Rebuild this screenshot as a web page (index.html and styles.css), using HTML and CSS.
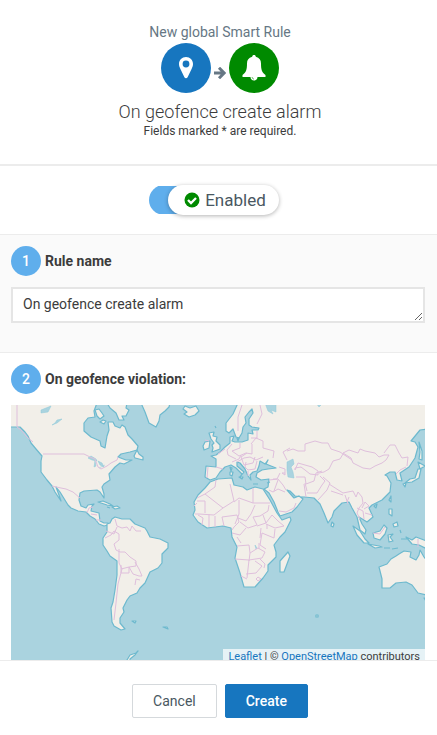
FILE: index.html
```html
<!DOCTYPE html>
<html lang="en">
<head>
<meta charset="utf-8">
<meta name="viewport" content="width=device-width, initial-scale=1">
<title>New global Smart Rule</title>
<link rel="stylesheet" href="styles.css">
</head>
<body>
<form class="rule">
  <header class="head">
    <p class="kicker">New global Smart Rule</p>
    <div class="flow">
      <span class="disc disc-pin"><svg width="14" height="22" viewBox="0 0 14 22"><path fill="#fff" fill-rule="evenodd" d="M7 0c4 0 7 3 7 7 0 2-.6 3.200-1.300 4.700L8.600 20.300c-.6 1.300-2.600 1.300-3.200 0L1.300 11.700C.6 10.200 0 9 0 7c0-4 3-7 7-7zm0 3.600a3.400 3.400 0 1 0 0 6.800 3.400 3.400 0 0 0 0-6.800z"/></svg></span>
      <svg class="arrow" width="12" height="12" viewBox="0 0 12 12"><path d="M0 6h10M5 .8L10.200 6 5 11.200" fill="none" stroke="#667784" stroke-width="3"/></svg>
      <span class="disc disc-bell"><svg width="24" height="26" viewBox="0 0 24 26"><path fill="#fff" d="M12 0c1 0 1.800.7 1.800 1.700C17.400 2.500 19 5 19 8.500c0 6.500 1 9 4.500 11.500v2H15.500c0 2-1.500 3.500-3.500 3.500S8.500 24 8.500 22H.5v-2C4 17.500 5 15 5 8.500 5 5 6.600 2.500 10.200 1.700 10.200.7 11 0 12 0z"/><path d="M10.200 22.200c0 1 .6 1.600 1.600 1.800" fill="none" stroke="#008a00" stroke-width=".7"/></svg></span>
    </div>
    <h1 class="title">On geofence create alarm</h1>
    <p class="hint">Fields marked * are required.</p>
  </header>
  <main class="body">
    <div class="state">
      <label class="switch">
        <input class="switch-input" type="checkbox" checked>
        <span class="knob"><svg width="16" height="16" viewBox="0 0 16 16"><circle cx="8" cy="8" r="7.500" fill="#008a00"/><path d="M4 8l3 3 5-5" fill="none" stroke="#fff" stroke-width="2.300"/></svg>Enabled</span>
      </label>
    </div>
    <section class="step step-name">
      <label class="step-label" for="name"><span class="num">1</span>Rule name</label>
      <textarea class="field" id="name" rows="1">On geofence create alarm</textarea>
    </section>
    <section class="step">
      <h2 class="step-label"><span class="num">2</span>On geofence violation:</h2>
      <div class="map">
        <svg class="world" viewBox="11 405 414 260" preserveAspectRatio="xMidYMin slice" role="img" aria-label="World map">
          <g class="land">
            <!-- North and Central America -->
            <path d="M9 403V427H20L25 432 28 436 31 443 36 449 42 456 41 461 41 472 47 480 52 486 55 492 61 501 59 495 56 487 60 492 68 505 71 508 78 511 86 512 90 516 95 519 99 524 104 526 108 525 108 523 104 523 100 521 99 513 91 511 92 506 94 504 88 505 86 508 81 506 79 500 80 493 84 491 97 490 100 492 104 498 104 494 102 487 104 484 110 480 109 474 115 467 120 463 124 464 132 460 126 460 118 457 121 454 130 452 137 450 138 446 132 439 128 435 125 427 122 425 120 428 115 426 113 422 108 422 109 430 107 436 105 448 101 446 100 441 91 437 84 431 84 423 88 418 95 417 94 411 97 403z"/>
            <!-- Arctic islands -->
            <path d="M95 410l4-1 3 4 2 3-4 3-3-3zM100 422l3-2 3 1-2 3zM107 403l3 5 6 5 3 7 5 0-2-4 4 0 3-6-3-2 1-5z"/>
            <path d="M141 403L145 412 149 423 156 427 159 421 160 415 165 411 169 407 170 403z"/>
            <path d="M183 409l2-3 5 2 6-2 3 5-4 4-6 2-5-3 3-2z"/>
            <path d="M134 456l3-6 2 4 4 3 0 3-4-1-4-1zM98 502l5-1 7 3 3 2-6-1zM112 507l5-1 3 2-5 1zM107 507l3 1"/>
            <!-- South America -->
            <path d="M107 524V532L103 538 103 545 107 551 110 556 117 561 117 575 115 590 113 602 111 608 112 622 114 626 121 630 125 629 120 623 120 618 124 612 123 608 127 600 130 596 137 593 140 588 145 583 150 572 158 568 162 563 162 554 168 548 168 543 160 539 150 537 147 531 145 528 135 524 130 519 122 519 115 517 112 519 110 523z"/>
            <path d="M132 621h4l-1 2zM127 660l3-5 6-2 2-2-3 4-5 4v5h-5z"/>
            <!-- Europe and Asia -->
            <path d="M238 403L233 414 226 423 226 431 229 433 233 429 236 437 239 438 242 433 243 427 246 423 245 417 249 412 252 409 253 413 249 419 249 425 252 427 259 428 258 430 252 430 253 434 248 433 248 440 242 442 235 442 232 441 234 436 230 437 230 443 225 447 220 452 216 455 211 456 216 459 216 467 206 466 205 477 210 480 216 478 220 472 225 467 231 465 236 468 242 474 240 477 244 472 237 466 237 462 240 463 245 469 248 476 251 480 250 475 253 472 257 471 259 466 260 461 265 464 268 460 266 464 276 468 268 469 262 470 257 473 256 477 261 480 269 479 268 487 264 489 269 493 274 502 278 512 280 516 292 512 297 507 303 499 299 496 294 498 287 490 290 491 295 496 314 498 320 504 324 513 328 523 332 517 334 511 342 503 349 502 352 508 357 517 360 530 365 534 366 530 362 524 359 517 367 522 373 517 369 508 372 505 382 500 390 492 391 483 387 476 385 475 390 472 395 472 397 480 402 481 400 473 409 467 415 458 418 447 415 442 411 441 420 430 427 429V403z"/>
            <path d="M209 433l5-1-1 4 4 1-1 4 4 4 0 4-8 3 1-4-1-3 2-2-3-4zM203 446l2-4 5-1-1 7-5 2zM215 426l1 2M237 438l2 0-1 3zM230 467l2 1-1 3zM230 472l3 0-1 4-2-1zM239 477l4 0-1 2zM253 484h5M267 483l3-1"/>
            <!-- Africa -->
            <path d="M263 489L255 487 247 490 243 487 234 485 232 478 218 479 210 482 205 488 198 495 194 502 195 510 193 515 198 522 207 528 223 526 231 528 232 537 237 547 235 558 240 573 244 587 255 587 263 578 268 571 268 565 276 557 276 552 274 545 280 537 285 532 291 520 290 517 282 520 277 513 270 500z"/>
            <path d="M288 552L290 556 284 572 280 572 280 561z"/>
            <!-- East Asian and Pacific islands -->
            <path d="M419 442l3 9v9l-3-1 1-7zM418 462l7 4-5 3zM421 469l-2 9-7 4-7 1 5-4 5-1 3-9zM403 484l3-1-1 4zM390 498l1-2 0 6-2-2zM374 506l3-2-1 4zM389 509l3 0 0 7-3-2zM393 524l4-2 1 4-4 1zM332 522l2 2-1 3-2-1z"/>
            <path d="M353 526L360 531 365 539 369 543 364 543 357 535zM368 544l11 2 3 1-7 1zM373 533l7-2 4-6 3 3-2 6-5 6-6-2zM388 535l5-1-3 3 3 4-4 1zM384 548l6 0M392 549l6-1M400 530l1 3M401 539h6M406 537L412 540 416 537 427 541V549L419 545 412 544z"/>
            <!-- Australia -->
            <path d="M379 567L387 564 391 559 396 556 399 554 404 551 411 552 410 557 416 560 419 555 420 550 424 557 427 561V595L418 593 412 585 406 582 396 583 390 588 382 588 382 579z"/>
            <path d="M424 598h3v5zM316 615h2v2h-2zM163 627l4 0 1 2z"/>
          </g>
          <g class="lake">
            <path d="M287 462l6-3 1 5-3 3 2 5 1 6-6-1-1-7zM88 458l3-2 5 3 1 2-5-1zM94 467l1-6 1 5zM98 461l4 2 2 4-4-2zM99 468l6-3M52 425l3-2 2-3 5-1-5 4zM41 410l10-4-3 6-7 1zM265 403l3 8 5 3-2-4 5 2 0-9zM316 403h7l-4 4zM255 545l2 3-1 1z"/>
          </g>
          <g class="borders">
            <path d="M17 405v22l4 3 6 7 6 5M43 454h41l6 3 5 2 3 8 3 2 6-3 4-3 6-3 1-3M52 486l9 2 5 1 7 3 7 6M87 513l2-5 4-1M91 514l6 1M96 520l5 0"/>
            <path d="M115 519l2 7 5 2 5-1 3 4 2-5 4 5 5 0M117 527l-3 7-8-3M105 538l6-3 3-4 5 3 0 6-5 4 2 6 4 2 5 0 5 5 6 4 0 5-7 1 0 6-8 0v-8M119 549l0 14 3 6-4 15-2 19-2 17M121 569l8-2 4 7 6 2 3 0-3-7-4-7M135 585l1-6 4 1"/>
            <path d="M242 405l-4 12 0 14M260 405l2 9-5 10M257 431v7l-6 0M251 444l5-6 7 3 0 7 11 3-1 7M232 444l-5 6 1 5 8 4M225 449l-7 5M240 443v5l-8 3 7 5 7-3 6 1 0-10M241 455l-2 4-7 3M237 462l7-4 6-1 6 3 7-3M247 453l-6 4 3 8 9-2 2-6M246 462l-1 5 3 3 7-1 2-8M248 471l0 5M208 467l-1 11M216 467l7 2M205 440l4 1M279 467l6 2 0 6-3-2 3 0M273 479l4 0 3-6M269 480l9-1 5 6 3 5M278 480l-4 11M269 490l4 2 5-3 7 3M279 511l7 1 8-4 2-5"/>
            <path d="M287 451l6-2 5 2 7 0 0-7 10-3 7 2 6 0 3 6 9 3 6 4 6 4M287 460l-2-4-2-4 7-4M343 453l6-3 9 3 2-4 5 2 10 2 4 4 5-2 5 0-3 5-4 3-7 3-5 3-7-1-10-5-2-5-8-5zM384 453l6-8 5 0 4 8 3 5 6-1-1 9M396 474l4-4 6-3M343 454l-3 5-7 2-4 8-5 3-5 1M295 470l3-7 7 2 7 2 6 4 0 4-8-1-5-4-4-3-6 1zM296 477l9 0 1 7 8-3 2-8 6-2M304 484l2 13M307 493l10 0 5-8 3-4-5-5M305 483l2 8M323 477l7 6-3 7-9 10M329 484l14 9 10-2 3 6 2-5 4 5 1 6-4 5-2 5 3 6M331 491l12 4M345 495l3 9M349 497l-2 5M357 508l6 3 1 8M362 508l3-6 4 4-5 3M365 513l7 2M373 533l7 1 5-7M418 539v8"/>
            <path d="M216 480l-1 7-10 7-8 4M205 494l18 14 11-7-4-17M197 501h8v12M197 503l-3 3M253 488v15l-14-5-5 4M253 503h17M239 500v14l-4 10M223 508l-9 7-15-1-4 0M198 515l5 3-1 7M209 514l0 13M215 516l0 11M224 526l-2-9 15-2 2 7-5 5-2 3M238 518l8 3 5-7 4-9M240 522l8 6 9-3-4-8 7-1 8-5 1-6M257 526l9-3-3-8M266 523l6-8 6 6 6 5-9 2-9-4M267 529v-5M275 529l-1 9-12-5-2 12 6 4M232 533l8 2 6-7M237 537l4 6M260 538l1-10M237 546l12-1 1 8-1 8M235 559l14 1 13-2 3-6-7-4-8 5M249 560l-2 18M246 574l10-1 6-7-7-5M264 568l1-4-5-5M259 549l0-6M241 576l6 3M256 579l2-2 3 2-3 2z"/>
          </g>
        </svg>
        <div class="credit"><a href="#leaflet">Leaflet</a> | © <a href="#osm">OpenStreetMap</a> contributors</div>
      </div>
    </section>
  </main>
  <footer class="foot">
    <button class="btn" type="button">Cancel</button>
    <button class="btn btn-primary" type="submit">Create</button>
  </footer>
</form>
</body>
</html>
```
FILE: styles.css
```css
* { box-sizing: border-box; }
body {
  margin: 0;
  background: #fff;
  color: #3c3c3c;
  font: 14px/20px Roboto, sans-serif;
}
p, h1, h2 { margin: 0; }
a { color: #1776bf; text-decoration: none; }
.rule {
  display: flex;
  flex-direction: column;
  height: 100vh;
}
.head {
  flex: none;
  padding: 21px 13px 25px 16px;
  border-bottom: 2px solid #ececec;
  text-align: center;
}
.kicker { color: #667784; line-height: 22px; }
.flow {
  display: flex;
  align-items: center;
  justify-content: center;
  gap: 3px;
}
.disc {
  display: flex;
  align-items: center;
  justify-content: center;
  width: 50px;
  height: 50px;
  border-radius: 50%;
}
.disc-pin { background: #1776bf; }
.disc-bell { background: #008a00; }
.arrow { margin-top: 10px; }
.title {
  margin-top: 8px;
  font-size: 18px;
  font-weight: 300;
  line-height: 22px;
}
.hint { font-size: 12px; line-height: 16px; }
.body {
  flex: 1;
  min-height: 0;
  overflow: hidden;
}
.state {
  display: flex;
  justify-content: center;
  padding: 19px 9px 19px 0;
}
.switch {
  position: relative;
  padding-left: 19px;
  border-radius: 15px;
  background: linear-gradient(#5faeec, #5faeec) 0 1px / 60px 28px no-repeat;
}
.switch-input {
  position: absolute;
  opacity: 0;
}
.knob {
  display: flex;
  align-items: center;
  gap: 5px;
  height: 30px;
  padding: 0 13px 0 16px;
  border-radius: 15px;
  background: #fff;
  box-shadow: 0 1px 4px rgba(0, 0, 0, .3);
  color: #495761;
  font-size: 17px;
}
.step {
  padding: 11px 12px 0 11px;
  border-top: 1px solid #ececec;
}
.step-name {
  padding-bottom: 29px;
  background: #fafafa;
}
.step-label {
  display: flex;
  align-items: center;
  gap: 4px;
  margin-bottom: 11px;
  font-size: 14px;
  font-weight: 700;
}
.num {
  width: 30px;
  height: 30px;
  border-radius: 50%;
  background: #5faeec;
  color: #fff;
  font-weight: 500;
  line-height: 30px;
  text-align: center;
}
.field {
  display: block;
  width: 100%;
  height: 36px;
  padding: 5px 10px;
  border: 2px solid #e5e5e5;
  border-radius: 0;
  background: #fff;
  color: #3c3c3c;
  font: inherit;
  overflow: hidden;
}
.map {
  position: relative;
  height: 260px;
  overflow: hidden;
  background: #aad3df;
}
.world {
  display: block;
  width: 100%;
  height: 100%;
  stroke-linejoin: round;
}
.land { fill: #f2efe9; stroke: #6db9ce; stroke-width: 1.2; }
.lake { fill: #aad3df; stroke: #8cc8d8; stroke-width: .5; }
.borders { fill: none; stroke: #dfbfdc; stroke-width: 1; }
.credit {
  position: absolute;
  right: 0;
  bottom: 0;
  padding: 0 5px;
  background: rgba(255, 255, 255, .7);
  font-size: 11px;
  line-height: 16px;
}
.foot {
  display: flex;
  flex: none;
  justify-content: center;
  gap: 8px;
  padding: 23px 13px 17px 16px;
  border-top: 1px solid #ececec;
}
.btn {
  height: 34px;
  padding: 0 20px;
  border: 1px solid #d5d9dc;
  border-radius: 2px;
  background: #fff;
  color: #495761;
  font: 14px/20px Roboto, sans-serif;
}
.btn-primary {
  border-color: #1776bf;
  background: #1776bf;
  color: #fff;
  font-weight: 500;
}
```
